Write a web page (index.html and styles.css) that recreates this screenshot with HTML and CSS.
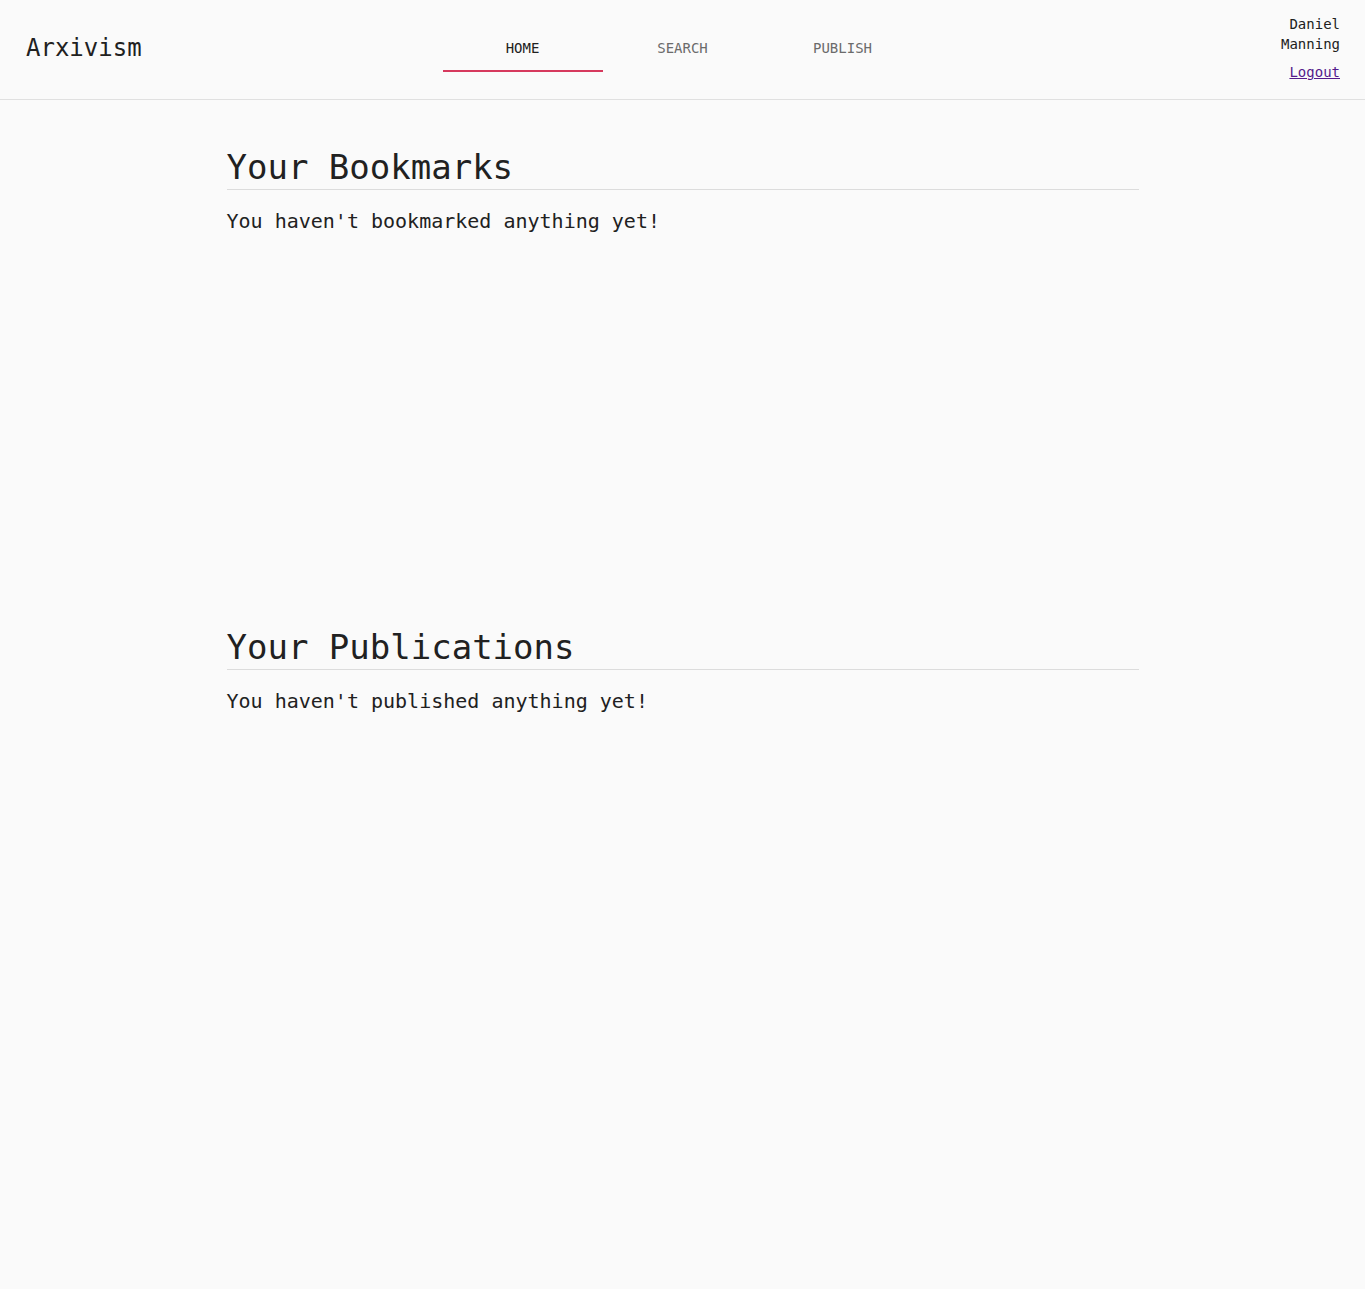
FILE: index.html
```html
<!DOCTYPE html>
<html lang="en">
<head>
<meta charset="utf-8">
<title>Arxivism</title>
<link rel="stylesheet" href="styles.css">
</head>
<body>
<header class="topbar">
  <div class="brand">Arxivism</div>
  <nav class="tabs">
    <a class="tab active" href="#">Home</a>
    <a class="tab" href="#">Search</a>
    <a class="tab" href="#">Publish</a>
  </nav>
  <div class="user">
    <div class="user-name">Daniel Manning</div>
    <a class="logout" href="#">Logout</a>
  </div>
</header>
<main class="content">
  <section class="panel">
    <h2 class="panel-title">Your Bookmarks</h2>
    <p class="panel-empty">You haven't bookmarked anything yet!</p>
  </section>
  <section class="panel">
    <h2 class="panel-title">Your Publications</h2>
    <p class="panel-empty">You haven't published anything yet!</p>
  </section>
</main>
</body>
</html>
```
FILE: styles.css
```css
* { box-sizing: border-box; }
html, body {
  margin: 0;
  padding: 0;
  background: #fafafa;
}
body {
  font-family: "DejaVu Sans Mono", "Liberation Mono", monospace;
  color: #212121;
  min-height: 1289px;
}
.topbar {
  display: grid;
  grid-template-columns: 1fr auto 1fr;
  height: 100px;
  border-bottom: 1px solid #e0e0e0;
}
.brand {
  justify-self: start;
  align-self: start;
  margin-top: 33px;
  padding-left: 26px;
  font-size: 24px;
  line-height: 30px;
  color: #212121;
}
.tabs {
  display: flex;
  align-self: start;
  margin-top: 24px;
}
.tab {
  display: block;
  width: 160px;
  height: 48px;
  padding-top: 2px;
  line-height: 44px;
  text-align: center;
  font-size: 14px;
  text-transform: uppercase;
  text-decoration: none;
  color: #6b6b6b;
  border-bottom: 2px solid transparent;
}
.tab.active {
  color: #212121;
  border-bottom-color: #d6395d;
}
.user {
  justify-self: end;
  align-self: start;
  margin-top: 14px;
  margin-right: 25px;
  width: min-content;
  text-align: right;
  font-size: 14px;
  line-height: 20px;
}
.user-name {
  color: #212121;
}
.logout {
  display: inline-block;
  margin-top: 8px;
  color: #551a8b;
  text-decoration: underline;
}
.content {
  width: 912px;
  margin: 0 auto;
  padding-top: 47px;
}
.panel {
  height: 480px;
}
.panel-title {
  margin: 0;
  font-size: 34px;
  font-weight: normal;
  line-height: 40px;
  padding-bottom: 2px;
  border-bottom: 1px solid #dcdcdc;
  color: #212121;
}
.panel-empty {
  margin: 19px 0 0;
  font-size: 20px;
  line-height: 24px;
  color: #212121;
}
```
